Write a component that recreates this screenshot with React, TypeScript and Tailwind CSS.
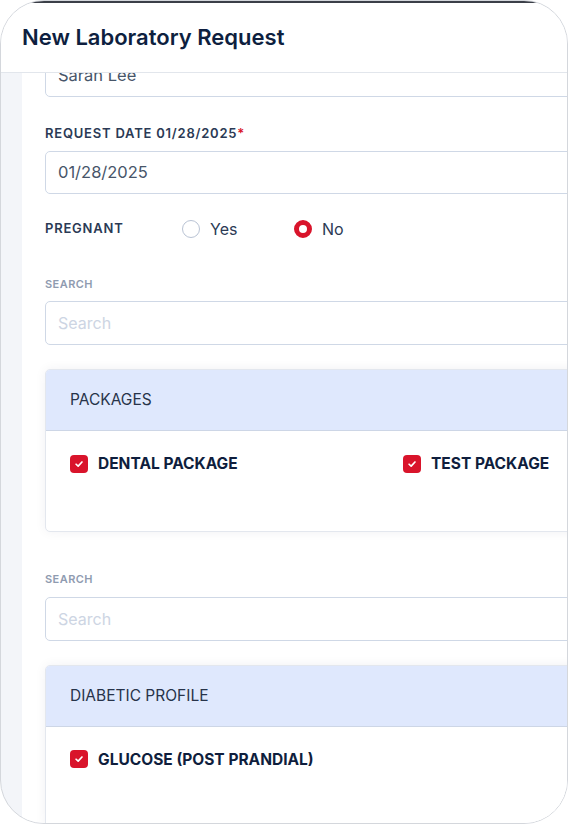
const Check = () => (
  <span className="flex h-[18px] w-[18px] shrink-0 items-center justify-center rounded-[4px] bg-[#d9142b]">
    <svg viewBox="0 0 12 12" className="h-[10px] w-[10px]" fill="none">
      <path d="M2.5 6.3 5 8.6 9.6 3.6" stroke="white" strokeWidth="2" strokeLinecap="round" strokeLinejoin="round" />
    </svg>
  </span>
);

const CheckItem = ({ label }: { label: string }) => (
  <label className="flex items-center gap-[10px]">
    <Check />
    <span className="text-[15.5px] font-bold text-[#0f1e3d]">{label}</span>
  </label>
);

const SearchField = () => (
  <div>
    <div className="text-[11px] font-semibold tracking-[0.04em] text-[#8f9bb0]">SEARCH</div>
    <input
      type="text"
      placeholder="Search"
      className="mt-[9px] h-[44px] w-full rounded-[5px] border border-[#cfd8e6] px-3 text-[16px] text-[#475569] placeholder:text-[#cdd5e3] focus:outline-none"
    />
  </div>
);

const Group = ({ title, items }: { title: string; items: string[] }) => (
  <div className="mt-[24px] overflow-hidden rounded-[5px] border border-[#e3e7ee] bg-white shadow-[0_0_12px_rgba(15,30,60,0.06)]">
    <div className="flex h-[61px] items-center border-b border-[#cdd6e6] bg-[#dfe8fd] px-[24px] text-[15.5px] text-[#27334a]">
      {title}
    </div>
    <div className="grid h-[100px] grid-cols-[333px_1fr] content-start px-[24px] pt-[21px]">
      {items.map((item) => (
        <CheckItem key={item} label={item} />
      ))}
    </div>
  </div>
);

export default function App() {
  return (
    <div className="h-screen w-full bg-white" style={{ fontFamily: 'Inter, "Noto Sans", sans-serif' }}>
      <div className="flex h-[824px] w-[568px] flex-col overflow-hidden rounded-[44px] border border-[#d4d7dc] bg-[#f3f5f9]">
        <div className="h-[2px] shrink-0 bg-[#3b3f48]" />
        <header className="z-10 flex h-[70px] shrink-0 items-center border-b border-[#e2e6ec] bg-white px-[21px]">
          <h1 className="text-[22px] font-semibold text-[#0e1f3f]">New Laboratory Request</h1>
        </header>

        <main className="ml-[21px] flex-1 overflow-hidden bg-white">
          <div className="-mt-[21px] w-[780px] pl-[23px]">
            <input
              type="text"
              defaultValue="Sarah Lee"
              className="h-[45px] w-full rounded-[5px] border border-[#cfd8e6] px-3 text-[16.5px] text-[#475569] focus:outline-none"
            />

            <div className="mt-[27px] text-[13px] font-semibold tracking-[0.06em] text-[#2b3a55]">
              REQUEST DATE 01/28/2025<span className="text-[#d9142b]">*</span>
            </div>
            <input
              type="text"
              defaultValue="01/28/2025"
              className="mt-[7px] h-[43px] w-full rounded-[5px] border border-[#cfd8e6] px-3 text-[16.5px] text-[#475569] focus:outline-none"
            />

            <div className="mt-[23px] flex items-center">
              <div className="w-[137px] text-[13px] font-semibold tracking-[0.06em] text-[#2b3a55]">PREGNANT</div>
              <label className="flex w-[112px] items-center gap-[10px]">
                <span className="h-[18px] w-[18px] rounded-full border-[1.5px] border-[#b9c3d4]" />
                <span className="text-[16px] text-[#2b3a55]">Yes</span>
              </label>
              <label className="flex items-center gap-[10px]">
                <span className="h-[18px] w-[18px] rounded-full border-[5px] border-[#d9142b] bg-white" />
                <span className="text-[16px] text-[#2b3a55]">No</span>
              </label>
            </div>

            <div className="mt-[35px]">
              <SearchField />
            </div>
            <Group title="PACKAGES" items={['DENTAL PACKAGE', 'TEST PACKAGE']} />

            <div className="mt-[39px]">
              <SearchField />
            </div>
            <Group title="DIABETIC PROFILE" items={['GLUCOSE (POST PRANDIAL)']} />
          </div>
        </main>
      </div>
    </div>
  );
}
